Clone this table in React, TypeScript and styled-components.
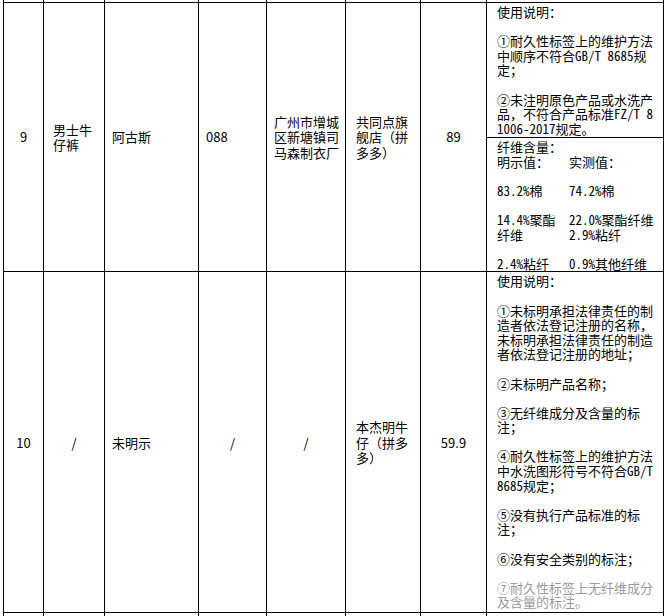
import React from 'react';
import styled, { createGlobalStyle } from 'styled-components';

const LINE = 14.6;

const GlobalStyle = createGlobalStyle`
  html, body {
    margin: 0;
    padding: 0;
    background: #fff;
    overflow: hidden;
  }
  body {
    width: 666px;
    height: 616px;
    font-family: "Noto Sans CJK SC", "Liberation Sans", sans-serif;
    color: #000;
  }
`;

const Page = styled.div`
  width: 666px;
  height: 616px;
  overflow: hidden;
  padding-left: 3px;
  box-sizing: border-box;
`;

const Table = styled.table`
  border-collapse: collapse;
  table-layout: fixed;
  width: 660px;
  margin-top: -10px;
  font-size: 13px;
`;

const Cell = styled.td<{ $align?: 'left' | 'center'; $pad?: number }>`
  border: 1px solid #000;
  padding: 0 0 0 ${(p) => p.$pad ?? 0}px;
  text-align: ${(p) => p.$align ?? 'left'};
  vertical-align: middle;
  line-height: 15.5px;
  white-space: nowrap;
  overflow: hidden;
`;

const NoteCell = styled.td<{ $height: number }>`
  border: 1px solid #000;
  height: ${(p) => p.$height}px;
  padding: 2px 0 0 10px;
  vertical-align: top;
  line-height: ${LINE}px;
  white-space: pre;
  overflow: hidden;
  box-sizing: border-box;
`;

// half-width latin, as in the source sheet
const Latin = styled.span`
  font-feature-settings: "hwid";
`;

const Para = styled.div<{ $faded?: boolean }>`
  color: ${(p) => (p.$faded ? '#9a9a9a' : '#000')};
  & + & {
    margin-top: ${LINE}px;
  }
`;

const FiberRow = styled.div<{ $gap?: boolean }>`
  display: grid;
  grid-template-columns: 72px 1fr;
  margin-top: ${(p) => (p.$gap ? LINE : 0)}px;
`;

const CutRow = styled.tr`
  height: 12px;
`;

const cols = [40, 61, 94, 68, 79, 75, 66, 177];

type Lines = string[][];

const Text = ({ s }: { s: string }) => (
  <div>
    {s.split(/([\x20-\x7e]+)/).map((part, i) =>
      /^[\x20-\x7e]+$/.test(part) ? <Latin key={i}>{part}</Latin> : part
    )}
  </div>
);

const Note = ({ paras, fadedFrom }: { paras: Lines; fadedFrom?: number }) => (
  <>
    {paras.map((lines, i) => (
      <Para key={i} $faded={fadedFrom !== undefined && i >= fadedFrom}>
        {lines.map((l, j) => (
          <Text key={j} s={l} />
        ))}
      </Para>
    ))}
  </>
);

const Br = ({ lines }: { lines: string[] }) => (
  <>
    {lines.map((l, i) => (
      <Text key={i} s={l} />
    ))}
  </>
);

const note9: Lines = [
  ['使用说明：'],
  ['①耐久性标签上的维护方法', '中顺序不符合GB/T 8685规', '定；'],
  ['②未注明原色产品或水洗产', '品，不符合产品标准FZ/T 8', '1006-2017规定。'],
];

const note10: Lines = [
  ['使用说明：'],
  [
    '①未标明承担法律责任的制',
    '造者依法登记注册的名称，',
    '未标明承担法律责任的制造',
    '者依法登记注册的地址；',
  ],
  ['②未标明产品名称；'],
  ['③无纤维成分及含量的标', '注；'],
  ['④耐久性标签上的维护方法', '中水洗图形符号不符合GB/T', '8685规定；'],
  ['⑤没有执行产品标准的标', '注；'],
  ['⑥没有安全类别的标注；'],
  ['⑦耐久性标签上无纤维成分', '及含量的标注。'],
];

const fibers: [string[], string[]][] = [
  [['83.2%棉'], ['74.2%棉']],
  [['14.4%聚酯', '纤维'], ['22.0%聚酯纤维', '2.9%粘纤']],
  [['2.4%粘纤'], ['0.9%其他纤维']],
];

export default function App() {
  return (
    <Page>
      <GlobalStyle />
      <Table>
        <colgroup>
          {cols.map((w, i) => (
            <col key={i} style={{ width: w }} />
          ))}
        </colgroup>
        <tbody>
          <CutRow>
            {cols.map((_, i) => (
              <Cell key={i} />
            ))}
          </CutRow>

          <tr>
            <Cell rowSpan={2} $align="center">9</Cell>
            <Cell rowSpan={2} $pad={9}>
              <Br lines={['男士牛', '仔裤']} />
            </Cell>
            <Cell rowSpan={2} $pad={7}>阿古斯</Cell>
            <Cell rowSpan={2} $pad={7}>088</Cell>
            <Cell rowSpan={2} $pad={7}>
              <Br lines={['广州市增城', '区新塘镇司', '马森制衣厂']} />
            </Cell>
            <Cell rowSpan={2} $pad={10}>
              <Br lines={['共同点旗', '舰店（拼', '多多）']} />
            </Cell>
            <Cell rowSpan={2} $align="center">89</Cell>
            <NoteCell $height={135}>
              <Note paras={note9} />
            </NoteCell>
          </tr>
          <tr>
            <NoteCell $height={134}>
              <Text s="纤维含量：" />
              <FiberRow>
                <Text s="明示值：" />
                <Text s="实测值：" />
              </FiberRow>
              {fibers.map(([a, b], i) => (
                <FiberRow key={i} $gap>
                  <div>
                    <Br lines={a} />
                  </div>
                  <div>
                    <Br lines={b} />
                  </div>
                </FiberRow>
              ))}
            </NoteCell>
          </tr>

          <tr>
            <Cell $align="center">10</Cell>
            <Cell $align="center">/</Cell>
            <Cell $pad={7}>未明示</Cell>
            <Cell $align="center">/</Cell>
            <Cell $align="center">/</Cell>
            <Cell $pad={10}>
              <Br lines={['本杰明牛', '仔（拼多', '多）']} />
            </Cell>
            <Cell $align="center">59.9</Cell>
            <NoteCell $height={341}>
              <Note paras={note10} fadedFrom={7} />
            </NoteCell>
          </tr>

          <tr>
            {cols.slice(0, 7).map((_, i) => (
              <Cell key={i} />
            ))}
            <NoteCell $height={60}>
              <Note paras={[['使用说明：']]} />
            </NoteCell>
          </tr>
        </tbody>
      </Table>
    </Page>
  );
}
